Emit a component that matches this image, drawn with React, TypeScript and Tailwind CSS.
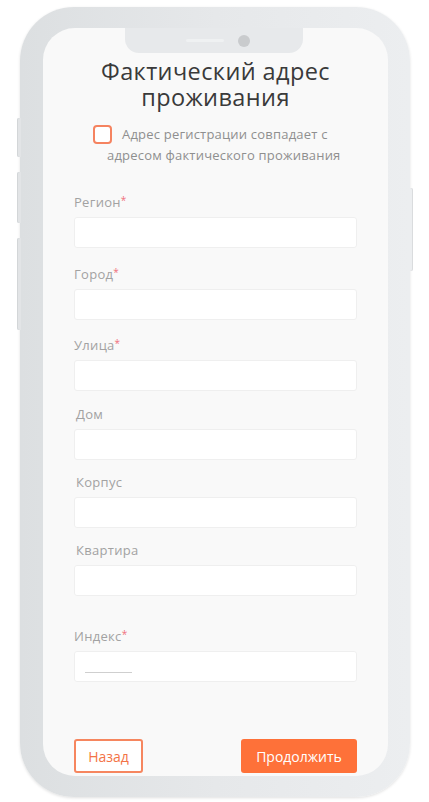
import { useState } from "react";

type Field = {
  label: string;
  required?: boolean;
  gap: string;
  indent?: boolean;
  mask?: boolean;
};

const fields: Field[] = [
  { label: "Регион", required: true, gap: "mt-[28px]" },
  { label: "Город", required: true, gap: "mt-[18px]" },
  { label: "Улица", required: true, gap: "mt-[17px]" },
  { label: "Дом", gap: "mt-[15px]", indent: true },
  { label: "Корпус", gap: "mt-[14px]", indent: true },
  { label: "Квартира", gap: "mt-[14px]", indent: true },
  { label: "Индекс", required: true, gap: "mt-[32px]", mask: true },
];

function FormField({ field }: { field: Field }) {
  return (
    <div className={`flex flex-col ${field.gap}`}>
      <label
        className={`h-4 text-[13px] leading-4 tracking-[0.3px] text-[#a2a2a2] ${field.indent ? "pl-[2px]" : ""}`}
      >
        {field.label}
        {field.required && (
          <span className="relative top-[-3px] text-[10px] text-[#f0707c]">*</span>
        )}
      </label>
      <div className="relative mt-[7px] h-[31px] rounded-[3px] border border-[#efefef] bg-white">
        {field.mask && (
          <span className="absolute left-[10px] top-[20px] h-px w-[47px] bg-[#cfcfcf]" />
        )}
      </div>
    </div>
  );
}

export default function App() {
  const [same, setSame] = useState(false);

  return (
    <div
      className="h-[802px] w-[429px] overflow-hidden bg-white pl-[20px] pt-[7px]"
      style={{ fontFamily: '"Open Sans", "Noto Sans", sans-serif' }}
    >
      <div className="relative h-[790px] w-[390px] rounded-[54px] bg-gradient-to-r from-[#dcdfe1] via-[#e6e8ea] to-[#eceef0] px-[22px] pb-[21px] pl-[23px] pt-[21px] shadow-[0_1px_3px_rgba(0,0,0,0.12)]">
        {/* side buttons */}
        <span className="absolute left-[-3px] top-[111px] h-[39px] w-[4px] rounded-l-[2px] bg-[#e2e4e6] shadow-[inset_1px_0_0_#d3d6d8]" />
        <span className="absolute left-[-3px] top-[165px] h-[51px] w-[4px] rounded-l-[2px] bg-[#e2e4e6] shadow-[inset_1px_0_0_#d3d6d8]" />
        <span className="absolute left-[-3px] top-[231px] h-[92px] w-[4px] rounded-l-[2px] bg-[#e2e4e6] shadow-[inset_1px_0_0_#d3d6d8]" />
        <span className="absolute right-[-3px] top-[181px] h-[83px] w-[4px] rounded-r-[2px] bg-[#eceef0] shadow-[inset_-1px_0_0_#dadcde]" />

        {/* screen */}
        <div className="relative flex h-[748px] w-[345px] flex-col overflow-hidden rounded-[32px] bg-[#f9f9f9] px-[31px] pt-[30px]">
          {/* notch */}
          <div className="absolute left-[82px] top-0 flex h-[25px] w-[178px] items-center justify-center gap-[14px] rounded-b-[14px] bg-[#e7e9eb] pl-[8px]">
            <span className="h-[3px] w-[38px] rounded-full bg-[#eff1f2]" />
            <span className="h-[12px] w-[12px] rounded-full bg-[#c9cbcd]" />
          </div>

          <h1 className="flex flex-col text-center text-[23.5px] font-normal leading-[26px] tracking-[0.4px] text-[#3a3a3a]">
            <span>Фактический адрес</span>
            <span>проживания</span>
          </h1>

          <label className="mt-[14px] flex cursor-pointer flex-col text-[13px] leading-[21px] tracking-[0.2px] text-[#8f8f8f]">
            <span className="flex items-center pl-[19px]">
              <input
                type="checkbox"
                checked={same}
                onChange={(e) => setSame(e.target.checked)}
                className="sr-only"
              />
              <span
                className={`mr-[10px] h-[19px] w-[19px] shrink-0 rounded-[4px] border-2 border-[#f58360] ${same ? "bg-[#f58360]" : "bg-white"}`}
              />
              Адрес регистрации совпадает с
            </span>
            <span className="pl-[33px]">адресом фактического проживания</span>
          </label>

          {fields.map((f) => (
            <FormField key={f.label} field={f} />
          ))}

          <div className="mt-auto flex items-end justify-between pb-[3px]">
            <button className="h-[34px] w-[69px] rounded-[3px] border-2 border-[#f6865f] bg-white text-[14px] text-[#f37346]">
              Назад
            </button>
            <button className="h-[34px] w-[116px] rounded-[3px] bg-[#fe7139] text-[14px] font-medium text-white">
              Продолжить
            </button>
          </div>
        </div>
      </div>
    </div>
  );
}
